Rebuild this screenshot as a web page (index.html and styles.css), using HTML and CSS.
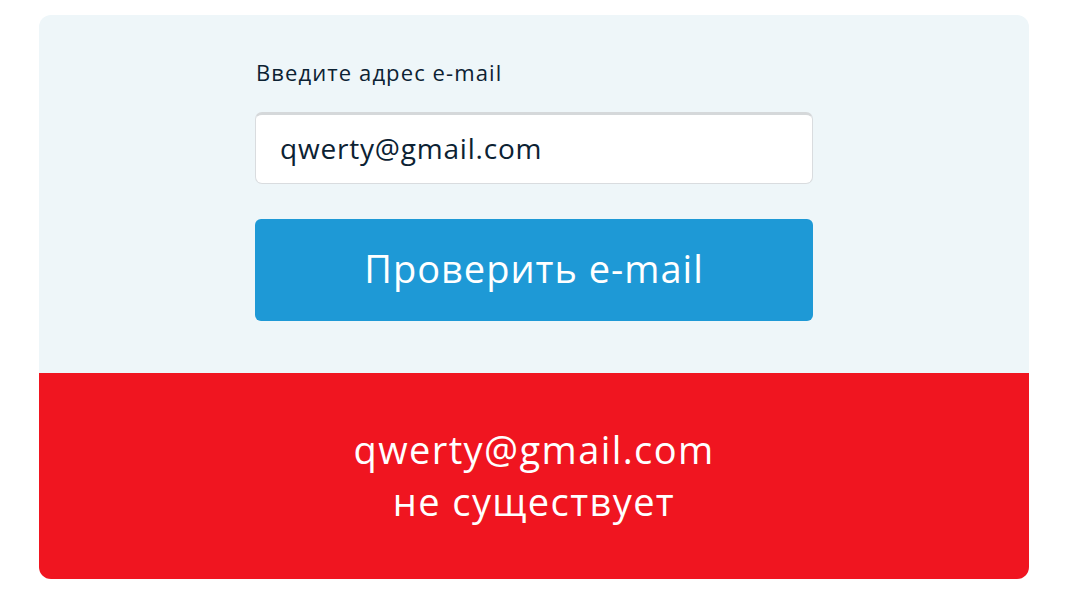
FILE: index.html
```html
<!DOCTYPE html>
<html lang="ru">
<head>
<meta charset="utf-8">
<link rel="stylesheet" href="styles.css">
</head>
<body>
<div class="card">
  <div class="form-area">
    <form class="form">
      <label class="label" for="email">Введите адрес e-mail</label>
      <div class="input">qwerty@gmail.com</div>
      <button class="btn" type="button">Проверить e-mail</button>
    </form>
  </div>
  <div class="result">
    <div>qwerty@gmail.com</div>
    <div>не существует</div>
  </div>
</div>
</body>
</html>
```
FILE: styles.css
```css
* { box-sizing: border-box; }
body {
  margin: 0;
  background: #ffffff;
  font-family: "Open Sans", "Noto Sans", sans-serif;
}
.card {
  margin: 15px 40px 0 39px;
  width: 990px;
  border-radius: 12px;
  overflow: hidden;
  background: #eef6f9;
}
.form-area {
  height: 358px;
  display: flex;
  justify-content: center;
  padding-top: 43px;
}
.form {
  width: 558px;
  display: flex;
  flex-direction: column;
}
.label {
  font-size: 22px;
  line-height: 28px;
  letter-spacing: 1.1px;
  color: #0c2233;
  padding-left: 1px;
  margin-bottom: 26px;
}
.input {
  height: 72px;
  background: #fff;
  border: 1px solid #d9dcdf;
  border-top: 3px solid #d5d8da;
  border-radius: 7px;
  font-size: 28px;
  letter-spacing: 0.8px;
  color: #0c2233;
  padding-left: 24px;
  padding-bottom: 2px;
  display: flex;
  align-items: center;
}
.btn {
  margin-top: 35px;
  height: 102px;
  border: 0;
  border-radius: 6px;
  background: #1e99d6;
  color: #fff;
  font-family: inherit;
  font-size: 38px;
  letter-spacing: 1px;
  padding: 0 0 4px;
}
.result {
  height: 206px;
  background: #f01520;
  color: #fff;
  font-size: 38px;
  letter-spacing: 1.4px;
  line-height: 52px;
  text-align: center;
  display: flex;
  flex-direction: column;
  justify-content: center;
  padding-bottom: 2px;
}
```
